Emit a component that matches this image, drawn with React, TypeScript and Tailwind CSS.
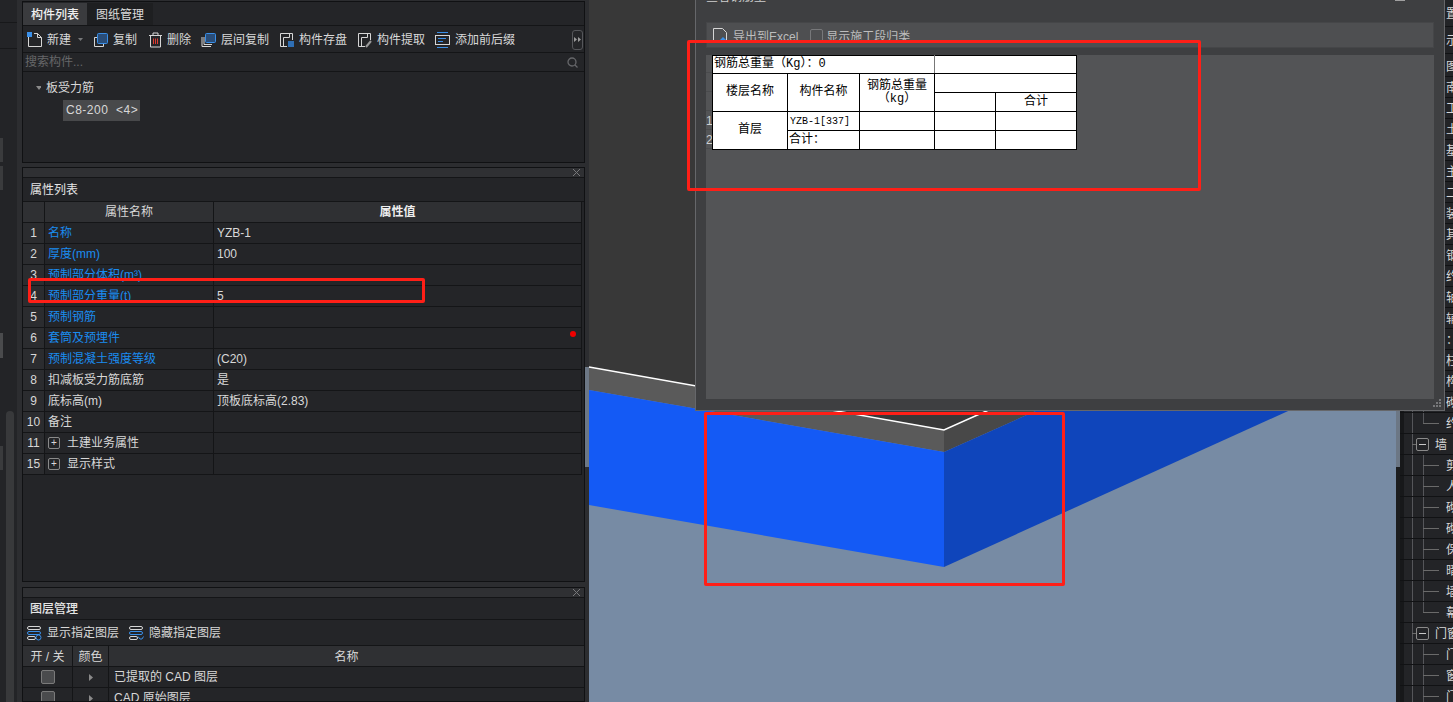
import { ReactNode } from "react";

const props = [
  { no: "1", name: "名称", value: "YZB-1", blue: true },
  { no: "2", name: "厚度(mm)", value: "100", blue: true },
  { no: "3", name: "预制部分体积(m³)", value: "", blue: true },
  { no: "4", name: "预制部分重量(t)", value: "5", blue: true },
  { no: "5", name: "预制钢筋", value: "", blue: true },
  { no: "6", name: "套筒及预埋件", value: "", blue: true },
  { no: "7", name: "预制混凝土强度等级", value: "(C20)", blue: true },
  { no: "8", name: "扣减板受力筋底筋", value: "是" },
  { no: "9", name: "底标高(m)", value: "顶板底标高(2.83)" },
  { no: "10", name: "备注", value: "" },
  { no: "11", name: "土建业务属性", value: "", plus: true },
  { no: "15", name: "显示样式", value: "", plus: true },
];

const treeRows = [
  "南", "工程", "土方", "基础", "主体", "二次", "装修", "其它", "钢筋", "约束", "轴线", "辅助", "：", "柱", "构造柱", "砌体柱", "约束边缘",
];
const wallRows = ["剪力墙", "人防门框墙", "砌体墙", "砌块墙", "保温墙", "暗梁", "墙垛", "幕墙"];
const doorRows = ["门", "窗", "门联窗"];

function Ico({ children, w = 15 }: { children: ReactNode; w?: number }) {
  return (
    <svg width={w} height="16" viewBox={`0 0 ${w} 16`} fill="none" stroke="#d6d6d6" strokeWidth="1" className="shrink-0">
      {children}
    </svg>
  );
}

function ToolItem({ icon, label, ml }: { icon: ReactNode; label: string; ml?: string }) {
  return (
    <div className={`flex items-center gap-[5px] ${ml ?? ""}`}>
      {icon}
      <span>{label}</span>
    </div>
  );
}

function PanelClose() {
  return (
    <div className="h-[10px] shrink-0 bg-[#2f3033] border-b border-[#141517] flex items-center justify-end pr-[4px]">
      <svg width="7" height="7" viewBox="0 0 7 7" stroke="#77787a" strokeWidth="1">
        <path d="M0 0L7 7M7 0L0 7" />
      </svg>
    </div>
  );
}

function LayerIcon({ eye }: { eye?: boolean }) {
  return (
    <svg width="15" height="16" viewBox="0 0 15 16" fill="none" strokeWidth="1" className="shrink-0">
      <rect x="0.5" y="1.5" width="13" height="3" rx="1.5" stroke="#d6d6d6" />
      <rect x="0.5" y="6.5" width="13" height="3" rx="1.5" stroke="#3a8fe8" />
      <rect x="0.5" y="11.5" width="8" height="3" rx="1.5" stroke="#d6d6d6" />
      {eye ? <circle cx="11.5" cy="12.5" r="2.5" stroke="#3a8fe8" /> : <path d="M9 11.5L11 14L13 14L14.5 11.5" stroke="#3a8fe8" />}
    </svg>
  );
}

function TreeRow({ text }: { text: string }) {
  return (
    <div className="relative h-[21px] border-b border-[#111214] pl-[46px] leading-[22px] whitespace-nowrap">
      <div className="absolute left-[23px] top-[10px] w-[16px] h-px bg-[#6a6a6a]" />
      {text}
    </div>
  );
}

function TreeHead({ text }: { text: string }) {
  return (
    <div className="relative h-[21px] border-b border-[#111214] pl-[35px] leading-[22px] whitespace-nowrap">
      <div className="absolute left-[12px] top-[10px] w-[4px] h-px bg-[#6a6a6a]" />
      <div className="absolute left-[16px] top-[4px] w-[13px] h-[13px] bg-[#232427] border border-[#8a8a8a] rounded-[2px] flex items-center justify-center">
        <div className="w-[7px] h-px bg-[#c8c8c8]" />
      </div>
      {text}
    </div>
  );
}

function App() {
  return (
    <div className="relative flex w-[1453px] h-[702px] overflow-hidden bg-[#2c2d30] text-[12px] text-[#d8d8d8] font-['Liberation_Sans','Noto_Sans_CJK_SC',sans-serif]">
      {/* far left strip */}
      <div className="relative w-[22px] shrink-0 bg-[#232427] border-r-[5px] border-[#2c2d30]">
        <div className="h-[23px] border-b border-[#17181a]" />
        <div className="h-[26px] border-b border-[#17181a]" />
        <div className="flex flex-col items-start">
          <div className="mt-[89px] w-[3px] h-[24px] bg-[#3a3b3d]" />
          <div className="mt-[4px] w-[3px] h-[24px] bg-[#3a3b3d]" />
          <div className="mt-[143px] w-[3px] h-[25px] bg-[#4a4b4d]" />
          <div className="mt-[88px] w-[3px] h-[24px] bg-[#3a3b3d]" />
        </div>
        <div className="absolute left-[6px] top-[411px] bottom-0 w-[8px] rounded-t-[4px] bg-[#38393b]" />
      </div>

      {/* left panels */}
      <div className="w-[563px] shrink-0 pt-px flex flex-col">
        <div className="h-[162px] shrink-0 bg-[#242528] border border-[#101113] flex flex-col">
          <div className="h-[24px] shrink-0 flex pt-[1px] border-b border-[#141517]">
            <div className="w-[64px] bg-[#3a3b3e] text-center leading-[25px] text-[#f0f0f0] font-medium">构件列表</div>
            <div className="w-[66px] bg-[#1e1f21] text-center leading-[25px] text-[#dcdcdc]">图纸管理</div>
          </div>
          <div className="relative h-[27px] shrink-0 border-b border-[#141517] flex items-center pl-[4px] pt-[1px]">
            <ToolItem
              label="新建"
              icon={
                <Ico>
                  <path d="M1.5 4.5V14.5H14.5V5.5L10.5 1.5H7" />
                  <path d="M10.5 1.5V5.5H14.5" />
                  <rect x="0" y="0" width="5" height="5" fill="#3a8fe8" stroke="none" />
                </Ico>
              }
            />
            <svg width="5" height="3" viewBox="0 0 5 3" className="ml-[7px] mr-[10px]">
              <path d="M0 0H5L2.5 3Z" fill="#77787a" />
            </svg>
            <ToolItem
              label="复制"
              icon={
                <Ico>
                  <path d="M4 5.5H1.5V14.5H10.5V12" />
                  <rect x="4.5" y="1.5" width="10" height="10" rx="1" fill="#2a4d78" stroke="#3a8fe8" />
                </Ico>
              }
            />
            <ToolItem
              ml="ml-[12px]"
              label="删除"
              icon={
                <Ico w={13}>
                  <path d="M0 3.5H13M4 3.5V1H9V3.5M1.5 3.5V15H11.5V3.5" />
                  <path d="M4.5 6.5V12M6.5 6.5V12M8.5 6.5V12" stroke="#e03a30" />
                </Ico>
              }
            />
            <ToolItem
              ml="ml-[10px]"
              label="层间复制"
              icon={
                <Ico>
                  <path d="M1 5V14.5H10M3 5V12.5H11" />
                  <rect x="4.5" y="1.5" width="10" height="9" rx="1" fill="#2a4d78" stroke="#3a8fe8" />
                </Ico>
              }
            />
            <ToolItem
              ml="ml-[10px]"
              label="构件存盘"
              icon={
                <Ico>
                  <path d="M8 14.5H1.5V1.5H13.5V8" />
                  <path d="M4.5 14.5V5.5H10.5M10.5 1.5V5.5" />
                  <rect x="9" y="9" width="6" height="6" fill="#2f6fb5" stroke="none" />
                </Ico>
              }
            />
            <ToolItem
              ml="ml-[10px]"
              label="构件提取"
              icon={
                <Ico>
                  <path d="M8 14.5H1.5V1.5H13.5V8" />
                  <path d="M4.5 14.5V5.5H10.5M10.5 1.5V5.5" />
                  <path d="M9 15L14 9" stroke="#9a9a9a" strokeWidth="2" />
                </Ico>
              }
            />
            <ToolItem
              ml="ml-[10px]"
              label="添加前后缀"
              icon={
                <Ico>
                  <rect x="0.5" y="3.5" width="14" height="9" stroke="#d6d6d6" />
                  <path d="M2 0.5H13M2 15.5H13M3 6.5H11M3 9.5H8" stroke="#3a8fe8" />
                </Ico>
              }
            />
            <div className="ml-auto mr-[1px] w-[11px] h-[20px] rounded-[3px] border border-[#55565a] flex items-center justify-center">
              <svg width="7" height="5" viewBox="0 0 7 5" fill="#9a9a9a">
                <path d="M0 0L3 2.5L0 5ZM4 0L7 2.5L4 5Z" />
              </svg>
            </div>
          </div>
          <div className="h-[19px] shrink-0 border-b border-[#141517] flex items-center justify-between pl-[2px] pr-[6px] text-[#666769]">
            <span>搜索构件...</span>
            <svg width="11" height="11" viewBox="0 0 11 11" fill="none" stroke="#66676a" strokeWidth="1.3">
              <circle cx="5" cy="5" r="4" />
              <path d="M8 8L10.5 10.5" />
            </svg>
          </div>
          <div className="flex items-center mt-[7px] pl-[13px] h-[18px]">
            <svg width="5" height="4" viewBox="0 0 5 4" className="mr-[5px]">
              <path d="M0 0H6L3 4Z" fill="#8a8a8a" />
            </svg>
            <span>板受力筋</span>
          </div>
          <div className="mt-[3px] ml-[40px] w-[77px] h-[21px] bg-[#48494b] pl-[3px] leading-[21px] whitespace-nowrap tracking-[0.5px]">C8-200&nbsp;&nbsp;&lt;4&gt;</div>
        </div>

        <div className="mt-[4px] h-[415px] shrink-0 bg-[#242528] border border-[#101113] flex flex-col">
          <PanelClose />
          <div className="h-[24px] shrink-0 pl-[7px] leading-[24px] border-b border-[#141517] text-[#e6e6e6]">属性列表</div>
          <div className="flex h-[21px] shrink-0 mr-[2px] bg-[#2f3033] border-b border-[#141517] text-center leading-[21px]">
            <div className="w-[22px] border-r border-[#141517]" />
            <div className="w-[169px] border-r border-[#141517]">属性名称</div>
            <div className="flex-1 font-bold text-[#eeeeee] border-r border-[#141517]">属性值</div>
          </div>
          {props.map((p) => (
            <div key={p.no} className="relative flex h-[21px] shrink-0 mr-[2px] border-b border-[#141517] leading-[21px]">
              <div className="w-[22px] shrink-0 bg-[#2b2c2f] border-r border-[#141517] text-center">{p.no}</div>
              <div className={`w-[169px] shrink-0 border-r border-[#141517] pl-[3px] flex items-center ${p.blue ? "text-[#1a8cf0]" : ""}`}>
                {p.plus && (
                  <div className="w-[12px] h-[12px] mr-[7px] border border-[#8a8a8a] rounded-[2px] flex items-center justify-center text-[10px] leading-none">+</div>
                )}
                <span>{p.name}</span>
              </div>
              <div className="flex-1 pl-[3px] border-r border-[#141517]">{p.value}</div>
              {p.no === "6" && <div className="absolute right-[6px] top-[3px] w-[6px] h-[6px] rounded-full bg-[#f00000]" />}
            </div>
          ))}
        </div>

        <div className="mt-[5px] flex-1 bg-[#242528] border border-[#101113] flex flex-col overflow-hidden">
          <PanelClose />
          <div className="h-[22px] shrink-0 pl-[7px] leading-[22px] border-b border-[#141517] font-medium text-[#e6e6e6]">图层管理</div>
          <div className="h-[26px] shrink-0 pl-[4px] pt-[1px] flex items-center gap-[10px] border-b border-[#141517]">
            <ToolItem icon={<LayerIcon eye />} label="显示指定图层" />
            <ToolItem icon={<LayerIcon />} label="隐藏指定图层" />
          </div>
          <div className="flex h-[21px] shrink-0 bg-[#2f3033] border-b border-[#141517] text-center leading-[22px]">
            <div className="w-[50px] border-r border-[#141517]">开 / 关</div>
            <div className="w-[36px] border-r border-[#141517]">颜色</div>
            <div className="flex-1">名称</div>
          </div>
          {["已提取的 CAD 图层", "CAD 原始图层"].map((t) => (
            <div key={t} className="flex h-[21px] shrink-0 border-b border-[#141517] leading-[20px]">
              <div className="w-[50px] border-r border-[#141517] flex items-center justify-center">
                <div className="w-[14px] h-[14px] rounded-[2px] bg-[#4a4b4d] border border-[#7a7a7a]" />
              </div>
              <div className="w-[36px] border-r border-[#141517] flex items-center justify-center">
                <svg width="4" height="7" viewBox="0 0 4 7">
                  <path d="M0 0L4 3.5L0 7Z" fill="#8a8a8a" />
                </svg>
              </div>
              <div className="flex-1 pl-[5px]">{t}</div>
            </div>
          ))}
        </div>
      </div>

      {/* divider scroll handle */}
      <div className="w-[4px] shrink-0 bg-[#2c2d30] flex items-start">
        <div className="mt-[367px] w-[4px] h-[100px] bg-[#6c7785]" />
      </div>

      {/* 3D viewport */}
      <div className="w-[807px] shrink-0 bg-[#778ba4]">
        <svg width="807" height="702" viewBox="589 0 807 702" className="block">
          <polygon points="589,0 1396,0 1396,231 944,430 589,367" fill="#383838" />
          <polygon points="589,367 944,430 944,452 589,390" fill="#5a5a5a" />
          <polygon points="944,430 1396,231 1396,250 944,452" fill="#484848" />
          <polygon points="589,390 944,452 944,567 589,505" fill="#145af5" />
          <polygon points="944,452 1396,250 1396,362 944,567" fill="#0f45bb" />
          <polyline points="589,367 944,430 1020,396" fill="none" stroke="#ffffff" strokeWidth="1.6" />
        </svg>
      </div>

      {/* right scroll handle */}
      <div className="w-[4px] shrink-0 bg-[#1c1d1f] flex items-start">
        <div className="w-[4px] h-[467px] bg-[#6c7785]" />
      </div>

      {/* right tree */}
      <div className="relative flex-1 min-w-0 bg-[#232427] overflow-hidden">
        <div className="absolute left-[12px] top-0 bottom-0 w-px bg-[#55565a]" />
        <div className="absolute left-[23px] top-0 h-[424px] w-px bg-[#55565a]" />
        <div className="absolute left-[23px] top-[455px] h-[158px] w-px bg-[#55565a]" />
        <div className="absolute left-[23px] top-[644px] bottom-0 w-px bg-[#55565a]" />
        <div className="absolute left-0 top-0 bottom-0 w-[4px] bg-[#17181a]" />
        <div className="h-[27px] border-b border-[#111214] pl-[46px] leading-[28px] whitespace-nowrap">置</div>
        <div className="h-[27px] border-b border-[#111214] pl-[46px] leading-[28px] whitespace-nowrap">示</div>
        <div className="h-[23px] border-b border-[#111214] pl-[46px] leading-[26px] whitespace-nowrap">图元</div>
        {treeRows.map((t, i) => (
          <TreeRow key={i} text={t} />
        ))}
        <TreeHead text="墙" />
        {wallRows.map((t, i) => (
          <TreeRow key={i} text={t} />
        ))}
        <TreeHead text="门窗洞" />
        {doorRows.map((t, i) => (
          <TreeRow key={i} text={t} />
        ))}
      </div>

      {/* floating dialog */}
      <div className="absolute left-[695px] top-0 w-[750px] h-[411px] bg-[#3e3f41] border-l border-b border-r border-[#66676a] flex flex-col">
        <div className="h-[22px] shrink-0 pl-[10px] relative overflow-hidden">
          <div className="-mt-[10px] text-[#cfcfcf] leading-[14px]">查看钢筋量</div>
          <div className="absolute right-[39px] top-0 w-[10px] h-px bg-[#a0a0a0]" />
        </div>
        <div className="mx-[10px] h-[26px] shrink-0 bg-[#4e4f51] border border-[#454648] flex items-center pl-[6px] text-[#bdbdbd]">
          <svg width="15" height="16" viewBox="0 0 15 16" fill="none" stroke="#d6d6d6" className="shrink-0 mr-[5px]">
            <path d="M0.5 15.5V1.5H9.5L13.5 5.5V15.5" />
            <path d="M6 14L14 14L10 10Z" fill="#3a8fe8" stroke="none" />
          </svg>
          <span className="pt-[3px]">导出到Excel</span>
          <div className="ml-[12px] mr-[3px] w-[13px] h-[13px] rounded-[2px] border border-[#77787a]" />
          <span className="pt-[3px]">显示施工段归类</span>
        </div>
        <div className="relative mt-[7px] mx-[10px] flex-1 mb-[11px] bg-[#535456] flex items-start text-black">
          <div className="w-[6px] shrink-0 text-[#cfcfcf] overflow-hidden">
            <div className="h-[18px] border-b border-[#4a4b4d]" />
            <div className="h-[19px] border-b border-[#4a4b4d]" />
            <div className="h-[19px] border-b border-[#4a4b4d]" />
            <div className="h-[19px] border-b border-[#4a4b4d] leading-[20px]">1</div>
            <div className="h-[19px] border-b border-[#4a4b4d] leading-[20px]">2</div>
          </div>
          <table className="table-fixed w-[364px] border-collapse bg-white border border-black text-center leading-[13px] font-['Liberation_Mono','Noto_Sans_CJK_SC',monospace]">
            <colgroup>
              <col className="w-[75px]" />
              <col className="w-[72px]" />
              <col className="w-[75px]" />
              <col className="w-[61px]" />
              <col className="w-[81px]" />
            </colgroup>
            <tbody>
              <tr className="h-[18px]">
                <td colSpan={3} className="border-r border-b border-r-[#777777] border-b-black text-left pl-[1px]">钢筋总重量（Kg）：0</td>
                <td colSpan={2} className="border-b border-black" />
              </tr>
              <tr className="h-[19px]">
                <td rowSpan={2} className="border border-black">楼层名称</td>
                <td rowSpan={2} className="border border-black">构件名称</td>
                <td rowSpan={2} className="border border-black">钢筋总重量<br />（kg）</td>
                <td colSpan={2} className="border border-black" />
              </tr>
              <tr className="h-[19px]">
                <td className="border border-black" />
                <td className="border border-black">合计</td>
              </tr>
              <tr className="h-[19px]">
                <td rowSpan={2} className="border border-black">首层</td>
                <td className="border border-black text-left pl-[2px] text-[10px]">YZB-1[337]</td>
                <td className="border border-black" />
                <td className="border border-black" />
                <td className="border border-black" />
              </tr>
              <tr className="h-[19px]">
                <td className="border border-black text-left pl-[1px]">合计：</td>
                <td className="border border-black" />
                <td className="border border-black" />
                <td className="border border-black" />
              </tr>
            </tbody>
          </table>
        </div>
        <svg width="9" height="9" viewBox="0 0 9 9" fill="#77787a" className="absolute right-[2px] bottom-[2px]">
          <path d="M6 0H8V2H6ZM3 3H5V5H3ZM6 3H8V5H6ZM0 6H2V8H0ZM3 6H5V8H3ZM6 6H8V8H6Z" />
        </svg>
      </div>

      {/* red annotation boxes */}
      <div className="absolute left-[28px] top-[278px] w-[397px] h-[25px] rounded-[2px] border-[3px] border-[#ff1f17]" />
      <div className="absolute left-[687px] top-[40px] w-[514px] h-[151px] rounded-[2px] border-[3px] border-[#ff1f17]" />
      <div className="absolute left-[704px] top-[412px] w-[361px] h-[174px] rounded-[2px] border-[3px] border-[#ff1f17]" />
    </div>
  );
}

export default App;
